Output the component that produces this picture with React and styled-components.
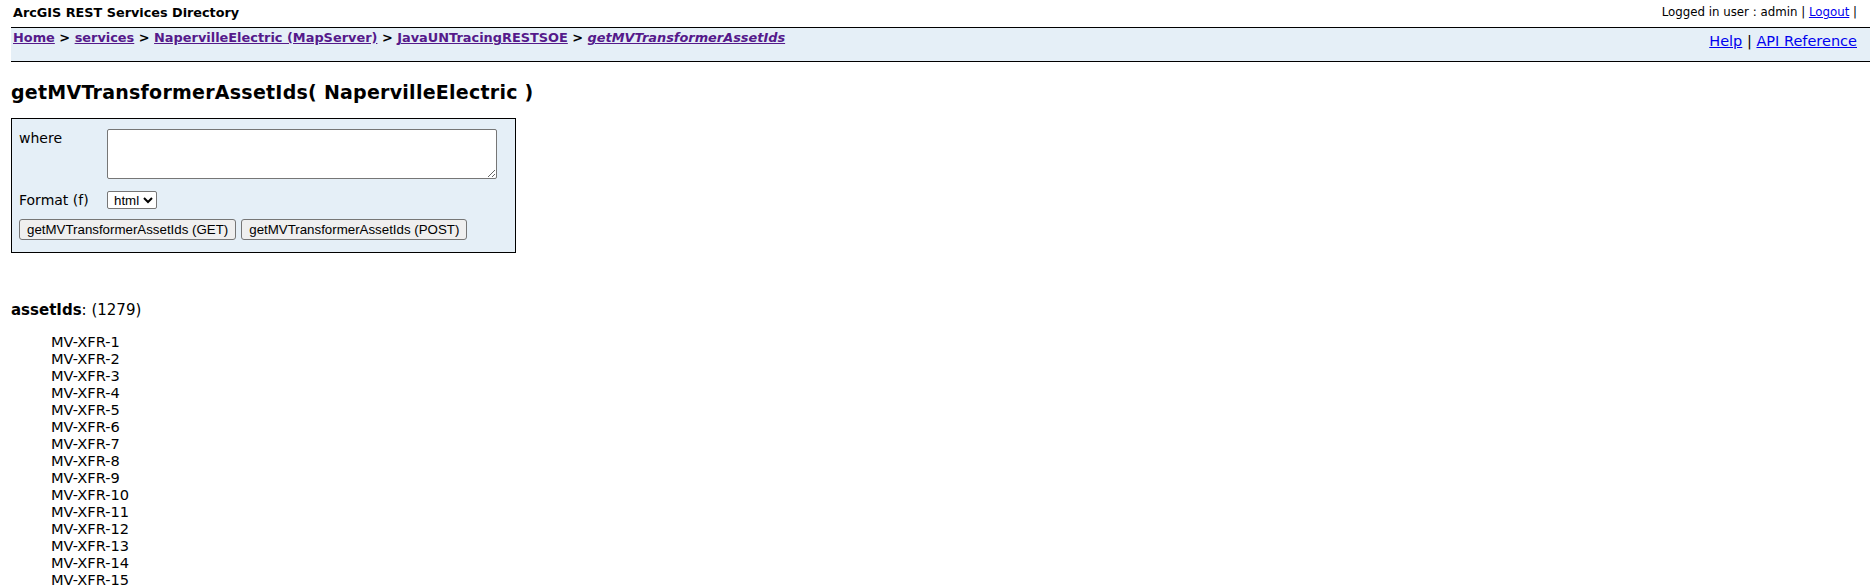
import React from 'react';
import styled, { createGlobalStyle } from 'styled-components';

const GlobalStyle = createGlobalStyle`
  body {
    margin: 0;
    background: #fff;
    color: #000;
    font-family: "DejaVu Sans", Verdana, sans-serif;
  }
`;

const Page = styled.div`
  padding-left: 11px;
`;

const TopRow = styled.div`
  display: flex;
  justify-content: space-between;
  align-items: flex-start;
  height: 22px;
  padding: 5px 13px 0 2px;
  font-size: 12px;
  line-height: 15px;
`;

const SiteTitle = styled.div`
  font-weight: bold;
  font-size: 12.8px;
`;

const UserInfo = styled.div`
  font-size: 11.8px;

  a {
    color: #0000ee;
  }
`;

const NavBar = styled.div`
  display: flex;
  justify-content: space-between;
  align-items: flex-start;
  height: 33px;
  background: #e5eff7;
  border-top: 1px solid #000;
  border-bottom: 1px solid #000;
  padding: 0 13px 0 2px;
`;

const Crumbs = styled.div`
  padding-top: 2px;
  font-size: 12.9px;
  font-weight: bold;
  line-height: 15px;

  a {
    color: #551a8b;
  }
`;

const CrumbLink = styled.a`
  font-style: ${(p) => (p.$current ? 'italic' : 'normal')};
`;

const NavLinks = styled.div`
  padding-top: 5px;
  font-size: 14.5px;
  line-height: 16px;

  a {
    color: #0000ee;
  }
`;

const Heading = styled.h2`
  margin: 20px 0 15px;
  font-size: 19px;
  letter-spacing: 0.25px;
  line-height: 21px;
  font-weight: bold;
`;

const FormBox = styled.div`
  box-sizing: border-box;
  width: 505px;
  border: 1px solid #000;
  background: #e5eff7;
  padding: 10px 18px 12px 7px;
  font-size: 14px;
`;

const FieldRow = styled.div`
  display: flex;
  align-items: ${(p) => (p.$center ? 'center' : 'flex-start')};
  margin-top: ${(p) => p.$gap || 0}px;
`;

const Label = styled.div`
  width: 88px;
  flex: none;
  line-height: 17px;
  padding-top: ${(p) => p.$top || 0}px;
`;

const WhereInput = styled.textarea`
  width: 390px;
  height: 50px;
  box-sizing: border-box;
  margin: 0;
  background: #fff;
  border: 1px solid #767676;
  border-radius: 2px;
`;

const FormatSelect = styled.select`
  width: 50px;
  height: 18px;
  margin: 0;
  padding: 0 0 0 2px;
  font-family: "Liberation Sans", Arial, sans-serif;
  font-size: 13.3px;
  background: #fff;
  color: #000;
  border: 1px solid #767676;
  border-radius: 2px;
`;

const Buttons = styled.div`
  display: flex;
  gap: 5px;
  margin-top: 10px;
`;

const ActionButton = styled.button`
  height: 21px;
  margin: 0;
  padding: 1px 7px;
  font-family: "Liberation Sans", Arial, sans-serif;
  font-size: 13.3px;
  color: #000;
  background: #efefef;
  border: 1px solid #767676;
  border-radius: 3px;
`;

const Result = styled.div`
  margin-top: 49px;
  font-size: 15px;
  line-height: 17px;
`;

const IdList = styled.ul`
  list-style: none;
  margin: 14px 0 0;
  padding-left: 40px;
  font-size: 14.6px;
  line-height: 17px;
`;

const ids = Array.from({ length: 40 }, (_, i) => `MV-XFR-${i + 1}`);

export default function App() {
  return (
    <>
      <GlobalStyle />
      <Page>
        <TopRow>
          <SiteTitle>ArcGIS REST Services Directory</SiteTitle>
          <UserInfo>
            Logged in user : admin | <a href="#">Logout</a> |
          </UserInfo>
        </TopRow>
        <NavBar>
          <Crumbs>
            <CrumbLink href="#">Home</CrumbLink> &gt;{' '}
            <CrumbLink href="#">services</CrumbLink> &gt;{' '}
            <CrumbLink href="#">NapervilleElectric (MapServer)</CrumbLink> &gt;{' '}
            <CrumbLink href="#">JavaUNTracingRESTSOE</CrumbLink> &gt;{' '}
            <CrumbLink href="#" $current>getMVTransformerAssetIds</CrumbLink>
          </Crumbs>
          <NavLinks>
            <a href="#">Help</a> | <a href="#">API Reference</a>
          </NavLinks>
        </NavBar>
        <Heading>getMVTransformerAssetIds( NapervilleElectric )</Heading>
        <FormBox>
          <FieldRow>
            <Label $top={1}>where</Label>
            <WhereInput />
          </FieldRow>
          <FieldRow $center $gap={12}>
            <Label>Format (f)</Label>
            <FormatSelect defaultValue="html">
              <option value="html">html</option>
              <option value="json">json</option>
            </FormatSelect>
          </FieldRow>
          <Buttons>
            <ActionButton>getMVTransformerAssetIds (GET)</ActionButton>
            <ActionButton>getMVTransformerAssetIds (POST)</ActionButton>
          </Buttons>
        </FormBox>
        <Result>
          <b>assetIds</b>: (1279)
        </Result>
        <IdList>
          {ids.map((id) => (
            <li key={id}>{id}</li>
          ))}
        </IdList>
      </Page>
    </>
  );
}
